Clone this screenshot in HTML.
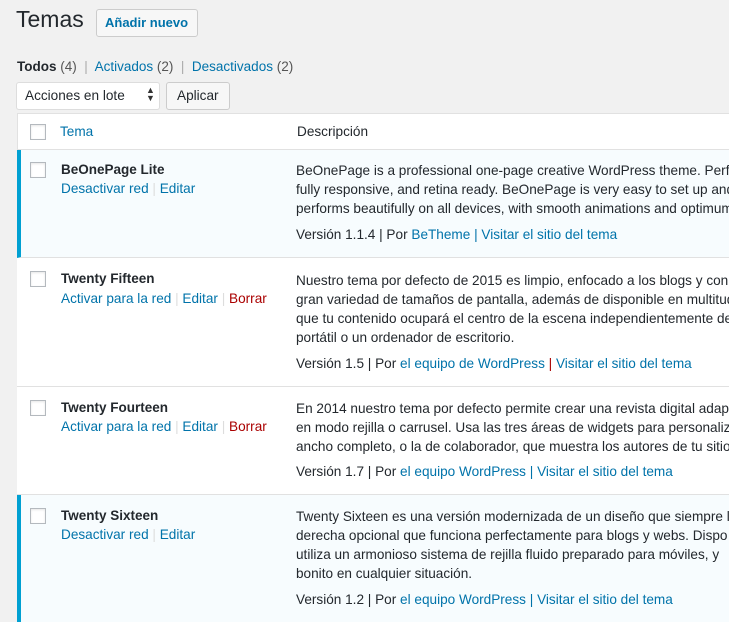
<!DOCTYPE html>
<html><head><meta charset="utf-8"><style>
html,body{margin:0;width:729px;height:622px;overflow:hidden}
body{background:#f1f1f1;font-family:"Liberation Sans",Arial,sans-serif;color:#23282d;position:relative}
.a{position:absolute;white-space:nowrap}
a{color:#0073aa;text-decoration:none}
.r{color:#a00}
.sep{color:#ddd}
.t{font-size:13.6px}
h1{position:absolute;left:16px;top:6px;margin:0;font-size:23px;font-weight:400;color:#23282d}
.btn{position:absolute;border:1px solid #ccc;background:#f7f7f7;border-radius:3px;box-sizing:border-box}
.tbl{position:absolute;left:17px;top:113px;width:720px;height:520px;background:#fff;border:1px solid #e1e1e1;box-sizing:border-box}
.row{position:absolute;left:17px;width:720px;border-bottom:1px solid #e1e1e1;box-sizing:border-box}
.act{background:#f7fcfe;border-left:4px solid #00a0d2}
.cb{position:absolute;left:30px;width:16px;height:16px;border:1px solid #b4b9be;background:#fff;box-sizing:border-box;box-shadow:inset 0 1px 2px rgba(0,0,0,.1)}
.nm{font-weight:bold;font-size:13.5px;color:#23282d}
</style></head><body>
<h1>Temas</h1>
<div class="btn" style="left:96px;top:9px;width:102px;height:28px"></div>
<div class="a" style="left:105px;top:15px;font-size:13px;font-weight:bold;color:#0073aa">Añadir nuevo</div>
<div class="a t" style="left:17px;top:59px;font-size:13.5px"><b>Todos</b> <span style="color:#555">(4)</span> <span style="color:#aaa">&nbsp;|&nbsp;</span> <a>Activados</a> <span style="color:#555">(2)</span> <span style="color:#aaa">&nbsp;|&nbsp;</span> <a>Desactivados</a> <span style="color:#555">(2)</span></div>
<div class="btn" style="left:16px;top:82px;width:144px;height:28px;background:#fff;border-color:#ddd"></div>
<div class="a t" style="left:25px;top:88px">Acciones en lote</div>
<div class="a" style="left:146px;top:86px;font-size:9px;line-height:8px;color:#333">▲<br>▼</div>
<div class="btn" style="left:166px;top:82px;width:64px;height:28px"></div>
<div class="a t" style="left:177px;top:88px">Aplicar</div>
<div class="tbl"></div>
<div class="row" style="top:113px;height:37px"></div>
<div class="cb" style="top:124px"></div>
<div class="a t" style="left:60px;top:124px"><a>Tema</a></div>
<div class="a t" style="left:297px;top:124px">Descripción</div>

<div class="row act" style="top:150px;height:108px"></div>
<div class="row" style="top:258px;height:129px;background:#fff"></div>
<div class="row" style="top:387px;height:108px;background:#fff"></div>
<div class="row act" style="top:495px;height:140px"></div>

<div class="cb" style="top:162px"></div>
<div class="a nm" style="left:61px;top:162px">BeOnePage Lite</div>
<div class="a t" style="left:61px;top:181px"><a>Desactivar red</a> <span class="sep">|</span> <a>Editar</a></div>
<div class="a t" style="left:296px;top:161px;line-height:19px">BeOnePage is a professional one-page creative WordPress theme. Perfect<br>fully responsive, and retina ready. BeOnePage is very easy to set up and<br>performs beautifully on all devices, with smooth animations and optimum</div>
<div class="a t" style="left:296px;top:227px">Versión 1.1.4 | Por <a>BeTheme</a> <a>|</a> <a>Visitar el sitio del tema</a></div>

<div class="cb" style="top:271px"></div>
<div class="a nm" style="left:61px;top:271px">Twenty Fifteen</div>
<div class="a t" style="left:61px;top:291px"><a>Activar para la red</a> <span class="sep">|</span> <a>Editar</a> <span class="sep">|</span> <span class="r">Borrar</span></div>
<div class="a t" style="left:296px;top:271px;line-height:19px">Nuestro tema por defecto de 2015 es limpio, enfocado a los blogs y con<br>gran variedad de tamaños de pantalla, además de disponible en multitud<br>que tu contenido ocupará el centro de la escena independientemente de<br>portátil o un ordenador de escritorio.</div>
<div class="a t" style="left:296px;top:356px">Versión 1.5 | Por <a>el equipo de WordPress</a> <span class="r">|</span> <a>Visitar el sitio del tema</a></div>

<div class="cb" style="top:400px"></div>
<div class="a nm" style="left:61px;top:400px">Twenty Fourteen</div>
<div class="a t" style="left:61px;top:419px"><a>Activar para la red</a> <span class="sep">|</span> <a>Editar</a> <span class="sep">|</span> <span class="r">Borrar</span></div>
<div class="a t" style="left:296px;top:399px;line-height:19px">En 2014 nuestro tema por defecto permite crear una revista digital adaptable<br>en modo rejilla o carrusel. Usa las tres áreas de widgets para personalizar<br>ancho completo, o la de colaborador, que muestra los autores de tu sitio</div>
<div class="a t" style="left:296px;top:464px">Versión 1.7 | Por <a>el equipo WordPress</a> <a>|</a> <a>Visitar el sitio del tema</a></div>

<div class="cb" style="top:508px"></div>
<div class="a nm" style="left:61px;top:508px">Twenty Sixteen</div>
<div class="a t" style="left:61px;top:527px"><a>Desactivar red</a> <span class="sep">|</span> <a>Editar</a></div>
<div class="a t" style="left:296px;top:507px;line-height:19px">Twenty Sixteen es una versión modernizada de un diseño que siempre l<br>derecha opcional que funciona perfectamente para blogs y webs. Dispo<br>utiliza un armonioso sistema de rejilla fluido preparado para móviles, y<br>bonito en cualquier situación.</div>
<div class="a t" style="left:296px;top:592px">Versión 1.2 | Por <a>el equipo WordPress</a> <a>|</a> <a>Visitar el sitio del tema</a></div>
</body></html>
